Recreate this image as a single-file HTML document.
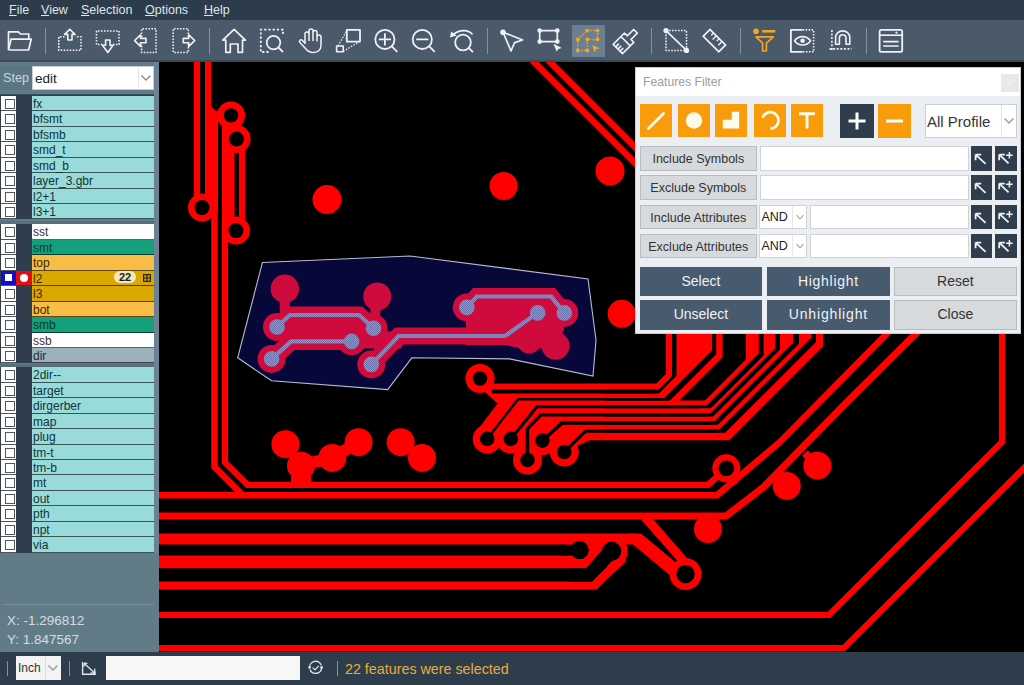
<!DOCTYPE html>
<html><head><meta charset="utf-8">
<style>
*{box-sizing:border-box;margin:0;padding:0}
html,body{width:1024px;height:685px;overflow:hidden;background:#2e3d4c;font-family:"Liberation Sans",sans-serif}
.abs{position:absolute}
#menubar{left:0;top:0;width:1024px;height:20px;background:#2d3c4b;color:#dfe5ea;font-size:12.5px}
#menubar span{position:absolute;top:3px}
#menubar u{text-decoration:underline;text-decoration-thickness:1px;text-underline-offset:1px}
#toolbar{left:0;top:20px;width:1024px;height:40px;background:#4a5a6b}
#tbline{left:0;top:60px;width:1024px;height:2px;background:#3c4a58}
.sep{position:absolute;top:28px;width:1px;height:26px;background:#8393a2}
#left{left:0;top:62px;width:159px;height:590px;background:#627c87}
#canvas{left:159px;top:62px;width:865px;height:590px;background:#000;overflow:hidden}
#status{left:0;top:652px;width:1024px;height:33px;background:#2e3d4c}
.row{position:absolute;left:0;width:154px;background:#2f3d4c}
.cb{position:absolute;left:1px;top:0;width:14.5px;background:#fff}
.cb:after{content:"";position:absolute;left:4px;top:3px;width:8px;height:8px;border:1px solid #555}
.nm{position:absolute;left:32px;top:0;width:121.5px;font-size:12px;line-height:16px;padding-left:1px;color:#0f3535;white-space:nowrap}
.cy{background:#98dbda}
.wh{background:#fff;color:#4a2b2b}
.gr{background:#13a07b;color:#073a2a}
.or{background:#f7bd46;color:#3a2800}
.yl{background:#dba800;color:#3a2800}
.gy{background:#9cb1bc;color:#1f2d35}
#dialog{left:635px;top:67px;width:386px;height:267px;background:#ebeff3;border:1px solid #c9cdd1}
#dtitle{position:absolute;left:0;top:0;width:384px;height:28px;background:#fff;color:#9d9d9d;font-size:12.2px;padding:7px 0 0 7px}
.obtn{position:absolute;width:32px;height:33px;background:#f99c0c}
.gbtn{position:absolute;background:#d6dadd;border:1px solid #b9bdc1;color:#333;font-size:12.5px;text-align:center;line-height:24px}
.inp{position:absolute;background:#fff;border:1px solid #cfd3d7}
.dbtn{position:absolute;width:22px;height:25px;background:#2f3d4c}
.bigbtn{position:absolute;height:29px;font-size:14px;text-align:center;line-height:29px}
</style></head><body>

<div id="menubar" class="abs">
<span style="left:9px"><u>F</u>ile</span>
<span style="left:41px"><u>V</u>iew</span>
<span style="left:81px"><u>S</u>election</span>
<span style="left:145px"><u>O</u>ptions</span>
<span style="left:204px"><u>H</u>elp</span>
</div>
<div id="toolbar" class="abs"></div><div id="tbline" class="abs"></div>
<div class="abs" style="left:572px;top:25px;width:33px;height:32px;background:#6b7f92"></div>
<div class="sep" style="left:45px"></div>
<div class="sep" style="left:209px"></div>
<div class="sep" style="left:487px"></div>
<div class="sep" style="left:651px"></div>
<div class="sep" style="left:740px"></div>
<div class="sep" style="left:866px"></div>
<svg class="abs" style="left:0;top:20px" width="1024" height="42" viewBox="0 20 1024 42"><path d="M8.5 50 V31.8 H18.3 L20.3 34 H28.8 V39" fill="none" stroke="#eef2f5" stroke-width="1.70" stroke-linejoin="round" /><path d="M8.5 50 H28.6 L31.2 39.2 H11 L8.5 50" fill="none" stroke="#eef2f5" stroke-width="1.70" stroke-linejoin="round" /><path d="M64.5 36.8 H58.8 V50.2 H81 V36.8 H75.5" fill="none" stroke="#eef2f5" stroke-width="1.60" stroke-linejoin="round" stroke-dasharray="1.6 1.4"/><path d="M69.8 29.2 L75 34.4 H72 V40 H67.8 V34.4 H64.6 Z" fill="none" stroke="#eef2f5" stroke-width="1.60" stroke-linejoin="round" /><path d="M102.5 44.5 H96.5 V31 H119 V44.5 H113" fill="none" stroke="#eef2f5" stroke-width="1.60" stroke-linejoin="round" stroke-dasharray="1.6 1.4"/><path d="M107.8 52.5 L113 45.2 H110 V40 H105.6 V45.2 H102.5 Z" fill="none" stroke="#eef2f5" stroke-width="1.60" stroke-linejoin="round" /><path d="M141.6 37 V28.8 H156 V52.5 H141.6 V44" fill="none" stroke="#eef2f5" stroke-width="1.60" stroke-linejoin="round" stroke-dasharray="1.6 1.4"/><path d="M134.6 40.6 L140.5 34.8 V38.4 H146 V42.8 H140.5 V46.4 Z" fill="none" stroke="#eef2f5" stroke-width="1.60" stroke-linejoin="round" /><path d="M188.3 37 V28.8 H173.2 V52.5 H188.3 V44" fill="none" stroke="#eef2f5" stroke-width="1.60" stroke-linejoin="round" stroke-dasharray="1.6 1.4"/><path d="M194.7 40.6 L188.8 34.8 V38.4 H183.3 V42.8 H188.8 V46.4 Z" fill="none" stroke="#eef2f5" stroke-width="1.60" stroke-linejoin="round" /><path d="M234.1 29.4 L222.8 40.2 H225.8 V52.3 H230.3 V44 H238 V52.3 H242.5 V40.2 H245.4 Z" fill="none" stroke="#eef2f5" stroke-width="1.70" stroke-linejoin="round" /><path d="M283 34 V29.6 H260.8 V52 H270" fill="none" stroke="#eef2f5" stroke-width="1.80" stroke-linejoin="round" stroke-dasharray="2.2 2"/><circle cx="273.5" cy="42.6" r="6.8" fill="none" stroke="#eef2f5" stroke-width="1.7"/><path d="M278.6 47.6 L283 52" fill="none" stroke="#eef2f5" stroke-width="1.80" stroke-linejoin="round" /><path d="M305 44 V34 A2 2 0 0 1 309 34 V41 M309 41 V31 A2 2 0 0 1 313 31 V41 M313 41 V32.5 A2 2 0 0 1 317 32.5 V41.5 M317 41.5 V37 A2 2 0 0 1 321 37 V45 C321 50 317.5 52.6 313 52.6 C309.5 52.6 307.5 51 305.5 48.5 L299.9 42.6 A1.6 1.6 0 0 1 302.3 40.3 L305 43.2" fill="none" stroke="#eef2f5" stroke-width="1.50" stroke-linejoin="round" /><path d="M346.8 29.9 H360 V41.6 H346.8 Z" fill="none" stroke="#eef2f5" stroke-width="1.80" stroke-linejoin="round" /><path d="M336.6 46 H343.2 V51.8 H336.6 Z" fill="none" stroke="#eef2f5" stroke-width="1.60" stroke-linejoin="round" /><path d="M338 46 L346.8 30.5 M343.2 51.5 L359.5 41.6" fill="none" stroke="#eef2f5" stroke-width="1.20" stroke-linejoin="round" stroke-dasharray="1.6 1.4"/><circle cx="384.9" cy="39.4" r="9.6" fill="none" stroke="#eef2f5" stroke-width="1.8"/><path d="M391.8 46.4 L397.3 51.8 M378.8 39.4 H391 M384.9 33.3 V45.5" fill="none" stroke="#eef2f5" stroke-width="1.80" stroke-linejoin="round" /><circle cx="422.3" cy="39.4" r="9.6" fill="none" stroke="#eef2f5" stroke-width="1.8"/><path d="M429.2 46.4 L434.7 51.8 M416.2 39.4 H428.4" fill="none" stroke="#eef2f5" stroke-width="1.80" stroke-linejoin="round" /><circle cx="463" cy="42.5" r="7.8" fill="none" stroke="#eef2f5" stroke-width="1.8"/><path d="M468.8 48.2 L473 52.2" fill="none" stroke="#eef2f5" stroke-width="1.80" stroke-linejoin="round" /><path d="M472.5 34.5 C469 29.8 460 28.8 453.5 34.5" fill="none" stroke="#eef2f5" stroke-width="1.70" stroke-linejoin="round" /><path d="M450 37.6 L451.2 31.6 L456.6 35.6 Z" fill="#eef2f5"/><path d="M503 32.2 L522.6 40 L514.6 42.6 L511 51 Z" fill="none" stroke="#eef2f5" stroke-width="1.70" stroke-linejoin="round" /><circle cx="503.0" cy="32.2" r="2.8" fill="#eef2f5"/><path d="M539.7 30.6 H557.3 V41.6 H539.7 Z" fill="none" stroke="#eef2f5" stroke-width="1.70" stroke-linejoin="round" /><circle cx="539.7" cy="30.6" r="2.3" fill="#eef2f5"/><circle cx="557.3" cy="30.6" r="2.3" fill="#eef2f5"/><circle cx="539.7" cy="41.6" r="2.3" fill="#eef2f5"/><circle cx="557.3" cy="41.6" r="2.3" fill="#eef2f5"/><path d="M553.5 43.8 L561.8 48 L558.4 48.9 L556.6 51.6 Z" fill="#eef2f5"/><path d="M577.8 39.4 L587.3 30.6 H597.5 V39.4 H587.3 V50.4 H577.8 Z" fill="none" stroke="#f5a623" stroke-width="1.50" stroke-linejoin="round" stroke-dasharray="1.6 1.6"/><circle cx="577.8" cy="39.4" r="1.9" fill="#f5a623"/><circle cx="587.3" cy="30.6" r="1.9" fill="#f5a623"/><circle cx="597.5" cy="30.6" r="1.9" fill="#f5a623"/><circle cx="597.5" cy="39.4" r="1.9" fill="#f5a623"/><circle cx="587.3" cy="39.4" r="1.9" fill="#f5a623"/><circle cx="587.3" cy="50.4" r="1.9" fill="#f5a623"/><circle cx="577.8" cy="50.4" r="1.9" fill="#f5a623"/><path d="M592.2 45 L599.8 48.2 L596.2 49.2 L594.6 52.2 Z" fill="#f5a623"/><g transform="translate(625.6 41.2) rotate(45)"><path d="M-2.6 -14 H2.6 V-5 H6.6 V0 H-6.6 V-5 H-2.6 Z M-6.6 0 H6.6 V11 H-6.6 Z M-3 11 V6.5 M0.2 11 V6.5 M3.2 11 V6.5" fill="none" stroke="#eef2f5" stroke-width="1.6" stroke-linejoin="round"/></g><path d="M666 30.6 H686.5 V50.4 H666 Z" fill="none" stroke="#eef2f5" stroke-width="1.50" stroke-linejoin="round" stroke-dasharray="1.6 1.4"/><path d="M666 30.6 L686.5 50.4" fill="none" stroke="#eef2f5" stroke-width="1.70" stroke-linejoin="round" /><circle cx="666.0" cy="30.6" r="2.6" fill="#eef2f5"/><circle cx="686.5" cy="50.4" r="2.6" fill="#eef2f5"/><g transform="translate(714.4 40.6) rotate(45)"><rect x="-11" y="-4.8" width="22" height="9.6" fill="none" stroke="#eef2f5" stroke-width="1.7"/><path d="M-6 -4.8 V-1.5 M-2 -4.8 V0.5 M2 -4.8 V-1.5 M6 -4.8 V0.5" stroke="#eef2f5" stroke-width="1.4"/></g><circle cx="756.0" cy="31.3" r="2.8" fill="#f5a623"/><path d="M762.2 31.3 H775.3" fill="none" stroke="#f5a623" stroke-width="2.60" stroke-linejoin="round" /><path d="M756 36.9 H773.3 L766.4 43.2 V51 H762.6 V43.2 Z" fill="none" stroke="#f5a623" stroke-width="1.70" stroke-linejoin="round" /><path d="M802.6 29.9 H790.9 V51.8 H802.6" fill="none" stroke="#eef2f5" stroke-width="1.80" stroke-linejoin="round" /><path d="M802.6 29.9 H813.6 V51.8 H802.6" fill="none" stroke="#eef2f5" stroke-width="1.60" stroke-linejoin="round" stroke-dasharray="1.6 1.4"/><path d="M794.5 40.8 C798.5 35.2 806.6 35.2 810.6 40.8 C806.6 46.4 798.5 46.4 794.5 40.8 Z" fill="none" stroke="#eef2f5" stroke-width="1.60" stroke-linejoin="round" /><circle cx="802.6" cy="40.8" r="2.3" fill="#eef2f5"/><path d="M831.9 29.9 V51.5 M829.5 48.9 H851.6" fill="none" stroke="#eef2f5" stroke-width="1.60" stroke-linejoin="round" stroke-dasharray="2 1.6"/><path d="M835.6 44.2 V37.8 C835.6 28.6 849.8 28.6 849.8 37.8 V44.2 H846 V37.8 C846 33.8 839.4 33.8 839.4 37.8 V44.2 Z" fill="none" stroke="#eef2f5" stroke-width="1.60" stroke-linejoin="round" /><rect x="879.6" y="29.9" width="22.6" height="21.9" rx="1.6" fill="none" stroke="#eef2f5" stroke-width="1.8"/><path d="M879.6 35.2 H902.2" fill="none" stroke="#eef2f5" stroke-width="1.60" stroke-linejoin="round" /><circle cx="896.4" cy="32.6" r="1.1" fill="#eef2f5"/><path d="M883.2 41.6 H898.6 M883.2 46 H898.6" fill="none" stroke="#eef2f5" stroke-width="1.70" stroke-linejoin="round" /></svg>
<div id="left" class="abs"></div>
<div class="abs" style="left:154px;top:62px;width:5px;height:491px;background:#6b8295"></div>
<div class="abs" style="left:0;top:66px;width:32px;height:24px;background:#5a7683"></div>
<div class="abs" style="left:3px;top:71px;font-size:12.6px;color:#c9d6dc">Step</div>
<div class="abs" style="left:32px;top:66px;width:122px;height:24px;background:#fff;border:1px solid #c8d0d4"></div>
<div class="abs" style="left:35px;top:70.5px;font-size:13.5px;color:#222">edit</div>
<div class="abs" style="left:138px;top:67px;width:1px;height:22px;background:#e6e6e6"></div>
<svg class="abs" style="left:140px;top:74px" width="12" height="8"><path d="M1.5 1.5 L6 6 L10.5 1.5" fill="none" stroke="#888" stroke-width="1.3"/></svg>
<div class="abs" style="left:0;top:94px;width:154px;height:1px;background:#3c4f5c"></div>
<div class="abs" style="left:0;top:94.90px;width:154px;height:124.60px;background:#2f3d4c"></div>
<div class="abs cb" style="top:95.90px;height:15.45px;box-shadow:inset 0 -1px rgba(20,28,36,0.75)"></div>
<div class="abs nm cy" style="top:95.90px;height:15.45px;box-shadow:inset 0 -1px rgba(0,0,0,0.62)">fx</div>
<div class="abs cb" style="top:111.35px;height:15.45px;box-shadow:inset 0 -1px rgba(20,28,36,0.75)"></div>
<div class="abs nm cy" style="top:111.35px;height:15.45px;box-shadow:inset 0 -1px rgba(0,0,0,0.62)">bfsmt</div>
<div class="abs cb" style="top:126.80px;height:15.45px;box-shadow:inset 0 -1px rgba(20,28,36,0.75)"></div>
<div class="abs nm cy" style="top:126.80px;height:15.45px;box-shadow:inset 0 -1px rgba(0,0,0,0.62)">bfsmb</div>
<div class="abs cb" style="top:142.25px;height:15.45px;box-shadow:inset 0 -1px rgba(20,28,36,0.75)"></div>
<div class="abs nm cy" style="top:142.25px;height:15.45px;box-shadow:inset 0 -1px rgba(0,0,0,0.62)">smd_t</div>
<div class="abs cb" style="top:157.70px;height:15.45px;box-shadow:inset 0 -1px rgba(20,28,36,0.75)"></div>
<div class="abs nm cy" style="top:157.70px;height:15.45px;box-shadow:inset 0 -1px rgba(0,0,0,0.62)">smd_b</div>
<div class="abs cb" style="top:173.15px;height:15.45px;box-shadow:inset 0 -1px rgba(20,28,36,0.75)"></div>
<div class="abs nm cy" style="top:173.15px;height:15.45px;box-shadow:inset 0 -1px rgba(0,0,0,0.62)">layer_3.gbr</div>
<div class="abs cb" style="top:188.60px;height:15.45px;box-shadow:inset 0 -1px rgba(20,28,36,0.75)"></div>
<div class="abs nm cy" style="top:188.60px;height:15.45px;box-shadow:inset 0 -1px rgba(0,0,0,0.62)">l2+1</div>
<div class="abs cb" style="top:204.05px;height:15.45px;box-shadow:inset 0 -1px rgba(20,28,36,0.75)"></div>
<div class="abs nm cy" style="top:204.05px;height:15.45px;box-shadow:inset 0 -1px rgba(0,0,0,0.62)">l3+1</div>
<div class="abs" style="left:0;top:223.40px;width:154px;height:140.05px;background:#2f3d4c"></div>
<div class="abs cb" style="top:224.40px;height:15.45px;box-shadow:inset 0 -1px rgba(20,28,36,0.75)"></div>
<div class="abs nm wh" style="top:224.40px;height:15.45px;box-shadow:inset 0 -1px rgba(0,0,0,0.62)">sst</div>
<div class="abs cb" style="top:239.85px;height:15.45px;box-shadow:inset 0 -1px rgba(20,28,36,0.75)"></div>
<div class="abs nm gr" style="top:239.85px;height:15.45px;box-shadow:inset 0 -1px rgba(0,0,0,0.62)">smt</div>
<div class="abs cb" style="top:255.30px;height:15.45px;box-shadow:inset 0 -1px rgba(20,28,36,0.75)"></div>
<div class="abs nm or" style="top:255.30px;height:15.45px;box-shadow:inset 0 -1px rgba(0,0,0,0.62)">top</div>
<div class="abs cb" style="top:270.75px;height:15.45px;box-shadow:inset 0 -1px rgba(20,28,36,0.75)"></div>
<div class="abs nm yl" style="top:270.75px;height:15.45px;box-shadow:inset 0 -1px rgba(0,0,0,0.62)">l2</div>
<div class="abs cb" style="top:286.20px;height:15.45px;box-shadow:inset 0 -1px rgba(20,28,36,0.75)"></div>
<div class="abs nm yl" style="top:286.20px;height:15.45px;box-shadow:inset 0 -1px rgba(0,0,0,0.62)">l3</div>
<div class="abs cb" style="top:301.65px;height:15.45px;box-shadow:inset 0 -1px rgba(20,28,36,0.75)"></div>
<div class="abs nm or" style="top:301.65px;height:15.45px;box-shadow:inset 0 -1px rgba(0,0,0,0.62)">bot</div>
<div class="abs cb" style="top:317.10px;height:15.45px;box-shadow:inset 0 -1px rgba(20,28,36,0.75)"></div>
<div class="abs nm gr" style="top:317.10px;height:15.45px;box-shadow:inset 0 -1px rgba(0,0,0,0.62)">smb</div>
<div class="abs cb" style="top:332.55px;height:15.45px;box-shadow:inset 0 -1px rgba(20,28,36,0.75)"></div>
<div class="abs nm wh" style="top:332.55px;height:15.45px;box-shadow:inset 0 -1px rgba(0,0,0,0.62)">ssb</div>
<div class="abs cb" style="top:348.00px;height:15.45px;box-shadow:inset 0 -1px rgba(20,28,36,0.75)"></div>
<div class="abs nm gy" style="top:348.00px;height:15.45px;box-shadow:inset 0 -1px rgba(0,0,0,0.62)">dir</div>
<div class="abs" style="left:0;top:366.30px;width:154px;height:186.40px;background:#2f3d4c"></div>
<div class="abs cb" style="top:367.30px;height:15.45px;box-shadow:inset 0 -1px rgba(20,28,36,0.75)"></div>
<div class="abs nm cy" style="top:367.30px;height:15.45px;box-shadow:inset 0 -1px rgba(0,0,0,0.62)">2dir--</div>
<div class="abs cb" style="top:382.75px;height:15.45px;box-shadow:inset 0 -1px rgba(20,28,36,0.75)"></div>
<div class="abs nm cy" style="top:382.75px;height:15.45px;box-shadow:inset 0 -1px rgba(0,0,0,0.62)">target</div>
<div class="abs cb" style="top:398.20px;height:15.45px;box-shadow:inset 0 -1px rgba(20,28,36,0.75)"></div>
<div class="abs nm cy" style="top:398.20px;height:15.45px;box-shadow:inset 0 -1px rgba(0,0,0,0.62)">dirgerber</div>
<div class="abs cb" style="top:413.65px;height:15.45px;box-shadow:inset 0 -1px rgba(20,28,36,0.75)"></div>
<div class="abs nm cy" style="top:413.65px;height:15.45px;box-shadow:inset 0 -1px rgba(0,0,0,0.62)">map</div>
<div class="abs cb" style="top:429.10px;height:15.45px;box-shadow:inset 0 -1px rgba(20,28,36,0.75)"></div>
<div class="abs nm cy" style="top:429.10px;height:15.45px;box-shadow:inset 0 -1px rgba(0,0,0,0.62)">plug</div>
<div class="abs cb" style="top:444.55px;height:15.45px;box-shadow:inset 0 -1px rgba(20,28,36,0.75)"></div>
<div class="abs nm cy" style="top:444.55px;height:15.45px;box-shadow:inset 0 -1px rgba(0,0,0,0.62)">tm-t</div>
<div class="abs cb" style="top:460.00px;height:15.45px;box-shadow:inset 0 -1px rgba(20,28,36,0.75)"></div>
<div class="abs nm cy" style="top:460.00px;height:15.45px;box-shadow:inset 0 -1px rgba(0,0,0,0.62)">tm-b</div>
<div class="abs cb" style="top:475.45px;height:15.45px;box-shadow:inset 0 -1px rgba(20,28,36,0.75)"></div>
<div class="abs nm cy" style="top:475.45px;height:15.45px;box-shadow:inset 0 -1px rgba(0,0,0,0.62)">mt</div>
<div class="abs cb" style="top:490.90px;height:15.45px;box-shadow:inset 0 -1px rgba(20,28,36,0.75)"></div>
<div class="abs nm cy" style="top:490.90px;height:15.45px;box-shadow:inset 0 -1px rgba(0,0,0,0.62)">out</div>
<div class="abs cb" style="top:506.35px;height:15.45px;box-shadow:inset 0 -1px rgba(20,28,36,0.75)"></div>
<div class="abs nm cy" style="top:506.35px;height:15.45px;box-shadow:inset 0 -1px rgba(0,0,0,0.62)">pth</div>
<div class="abs cb" style="top:521.80px;height:15.45px;box-shadow:inset 0 -1px rgba(20,28,36,0.75)"></div>
<div class="abs nm cy" style="top:521.80px;height:15.45px;box-shadow:inset 0 -1px rgba(0,0,0,0.62)">npt</div>
<div class="abs cb" style="top:537.25px;height:15.45px;box-shadow:inset 0 -1px rgba(20,28,36,0.75)"></div>
<div class="abs nm cy" style="top:537.25px;height:15.45px;box-shadow:inset 0 -1px rgba(0,0,0,0.62)">via</div>
<div class="abs" style="left:0;top:221.0px;width:154px;height:3px;background:#56707f"></div>
<div class="abs" style="left:0;top:364.0px;width:154px;height:3px;background:#56707f"></div>
<div class="abs" style="left:1px;top:270.75px;width:14.5px;height:14.5px;background:#1010c8"></div>
<div class="abs" style="left:5px;top:274.25px;width:7px;height:7px;background:#fff"></div>
<div class="abs" style="left:16px;top:270.75px;width:16px;height:14.5px;background:#e01010"></div>
<div class="abs" style="left:19.5px;top:274.25px;width:8px;height:8px;border-radius:50%;background:#fff"></div>
<div class="abs" style="left:114px;top:271.35px;width:22px;height:12px;border-radius:6px;background:#f6e9b9;font-size:11px;line-height:12px;text-align:center;color:#1a1a1a;font-weight:bold">22</div>
<svg class="abs" style="left:142.5px;top:273.75px" width="8" height="8"><rect x="0.6" y="0.6" width="6.8" height="6.8" fill="none" stroke="#222" stroke-width="1.2"/><path d="M4 0.6V7.4M0.6 4H7.4" stroke="#222" stroke-width="1.2"/></svg>
<div class="abs" style="left:3px;top:604px;width:151px;height:1px;background:#7890a0"></div>
<div class="abs" style="left:7px;top:613px;font-size:13.5px;color:#d4dde2">X: -1.296812</div>
<div class="abs" style="left:7px;top:632px;font-size:13.5px;color:#d4dde2">Y: 1.847567</div>
<svg id="canvas" class="abs" width="865" height="590" viewBox="159 62 865 590"><path d="M197.0 50.0 L197.0 203.0" fill="none" stroke="#ff0000" stroke-width="6.20" stroke-linejoin="miter" stroke-linecap="butt"/><circle cx="202.0" cy="207.6" r="14.0" fill="#ff0000"/><path d="M205.0 50.0 L211.0 50.0 L211.0 106.0 L216.0 111.0 L224.0 111.0 L224.0 118.0 L218.0 118.0 L218.0 212.0 L205.0 212.0Z" fill="#ff0000"/><path d="M214.5 205.0 L214.5 467.0 L242.5 495.0" fill="none" stroke="#ff0000" stroke-width="6.60" stroke-linejoin="miter" stroke-linecap="butt"/><circle cx="231.0" cy="115.4" r="14.0" fill="#ff0000"/><circle cx="236.5" cy="139.0" r="14.0" fill="#ff0000"/><path d="M222.0 122.0 L234.5 122.0 L234.5 228.0 L222.0 228.0Z" fill="#ff0000"/><path d="M242.0 139.0 L242.0 225.0" fill="none" stroke="#ff0000" stroke-width="6.20" stroke-linejoin="miter" stroke-linecap="butt"/><circle cx="236.0" cy="230.6" r="14.0" fill="#ff0000"/><path d="M225.0 225.0 L225.0 462.4 L247.6 484.8 L708.0 484.8 L726.3 468.3" fill="none" stroke="#ff0000" stroke-width="6.20" stroke-linejoin="miter" stroke-linecap="butt"/><circle cx="726.3" cy="468.3" r="14.0" fill="#ff0000"/><circle cx="733.0" cy="479.0" r="6.0" fill="#ff0000"/><circle cx="327.0" cy="199.6" r="14.5" fill="#ff0000"/><circle cx="503.6" cy="186.0" r="14.0" fill="#ff0000"/><circle cx="610.0" cy="171.0" r="14.5" fill="#ff0000"/><circle cx="621.6" cy="313.8" r="14.0" fill="#ff0000"/><path d="M527.0 55.0 L650.0 178.0" fill="none" stroke="#ff0000" stroke-width="6.40" stroke-linejoin="miter" stroke-linecap="butt"/><path d="M543.0 55.0 L650.0 162.0" fill="none" stroke="#ff0000" stroke-width="6.40" stroke-linejoin="miter" stroke-linecap="butt"/><path d="M150.0 495.3 L717.0 495.3 L780.0 442.0 L886.0 334.4 L900.0 320.0" fill="none" stroke="#ff0000" stroke-width="6.40" stroke-linejoin="miter" stroke-linecap="butt"/><path d="M150.0 516.0 L726.0 516.0 L763.0 487.6 L849.0 400.0 L915.0 334.4 L930.0 319.0" fill="none" stroke="#ff0000" stroke-width="7.00" stroke-linejoin="miter" stroke-linecap="butt"/><path d="M645.0 517.0 L688.0 566.0" fill="none" stroke="#ff0000" stroke-width="9.20" stroke-linejoin="miter" stroke-linecap="butt"/><path d="M150.0 539.0 L634.0 539.0" fill="none" stroke="#ff0000" stroke-width="11.00" stroke-linejoin="miter" stroke-linecap="butt"/><path d="M630.0 533.5 L641.0 533.5 L686.0 571.0 L678.0 582.0 L630.0 542.0Z" fill="#ff0000"/><circle cx="685.5" cy="574.0" r="16.0" fill="#ff0000"/><path d="M150.0 555.6 L590.0 555.6 L601.0 551.0 L585.8 568.3 L150.0 568.3Z" fill="#ff0000"/><path d="M150.0 581.5 L592.0 581.5 L613.0 561.0 L627.0 560.5 L596.3 589.4 L150.0 589.4Z" fill="#ff0000"/><circle cx="579.6" cy="549.9" r="14.5" fill="#ff0000"/><circle cx="611.7" cy="551.2" r="16.0" fill="#ff0000"/><path d="M580.0 536.0 L612.0 536.0 L612.0 566.0 L580.0 566.0Z" fill="#ff0000"/><path d="M560.0 544.7 L580.5 544.7 L580.5 555.6 L560.0 555.6Z" fill="#000"/><path d="M570.0 568.3 L585.8 568.3 L603.0 549.0 L613.0 560.0 L592.0 581.5 L570.0 581.5Z" fill="#000"/><path d="M150.0 615.0 L829.0 615.0 L1002.0 442.0 L1002.0 320.0" fill="none" stroke="#ff0000" stroke-width="6.20" stroke-linejoin="miter" stroke-linecap="butt"/><path d="M150.0 648.0 L844.0 648.0 L1040.0 452.0" fill="none" stroke="#ff0000" stroke-width="6.20" stroke-linejoin="miter" stroke-linecap="butt"/><circle cx="708.0" cy="529.0" r="14.0" fill="#ff0000"/><circle cx="786.7" cy="485.9" r="14.0" fill="#ff0000"/><circle cx="817.4" cy="465.7" r="14.0" fill="#ff0000"/><path d="M817.4 465.7 L805.0 453.0" fill="none" stroke="#ff0000" stroke-width="8.00" stroke-linejoin="miter" stroke-linecap="butt"/><circle cx="285.4" cy="444.2" r="14.0" fill="#ff0000"/><circle cx="301.0" cy="465.7" r="14.0" fill="#ff0000"/><circle cx="332.3" cy="457.9" r="14.0" fill="#ff0000"/><circle cx="358.6" cy="442.2" r="14.0" fill="#ff0000"/><circle cx="400.6" cy="442.2" r="14.0" fill="#ff0000"/><circle cx="422.0" cy="457.9" r="14.0" fill="#ff0000"/><path d="M301.0 465.0 L332.0 458.0" fill="none" stroke="#ff0000" stroke-width="12.00" stroke-linejoin="miter" stroke-linecap="butt"/><path d="M332.3 457.9 L358.6 442.2" fill="none" stroke="#ff0000" stroke-width="12.00" stroke-linejoin="miter" stroke-linecap="butt"/><path d="M291.0 470.0 L311.0 470.0 L311.0 486.0 L291.0 486.0Z" fill="#ff0000"/><circle cx="480.0" cy="378.5" r="14.5" fill="#ff0000"/><circle cx="487.2" cy="438.9" r="14.5" fill="#ff0000"/><circle cx="510.8" cy="438.9" r="14.5" fill="#ff0000"/><circle cx="527.5" cy="459.9" r="14.5" fill="#ff0000"/><circle cx="542.4" cy="440.6" r="14.5" fill="#ff0000"/><circle cx="564.3" cy="452.0" r="14.5" fill="#ff0000"/><path d="M489.0 389.0 L606.0 389.0 L606.0 440.0 L590.0 440.0 L564.3 452.0 L542.4 440.6 L527.5 459.9 L510.8 438.9 L487.2 438.9 L476.0 432.0 L497.6 403.6 L485.0 392.0Z" fill="#ff0000"/><path d="M480.0 377.5 L500.0 399.0" fill="none" stroke="#ff0000" stroke-width="9.00" stroke-linejoin="miter" stroke-linecap="butt"/><path d="M480.0 377.5 L489.0 386.5 L657.5 386.5 L669.0 375.0 L669.0 320.0" fill="none" stroke="#ff0000" stroke-width="6.00" stroke-linejoin="miter" stroke-linecap="butt"/><path d="M676.5 320.0 L712.2 320.0 L712.2 350.2 L664.4 398.0 L497.0 398.0 L497.0 393.5 L658.8 393.5 L676.5 375.8Z" fill="#ff0000"/><path d="M672.0 403.0 L719.4 355.6 L719.4 320.0" fill="none" stroke="#ff0000" stroke-width="6.40" stroke-linejoin="miter" stroke-linecap="butt"/><path d="M521.0 400.5 L704.9 400.5 L745.8 359.6 L745.8 320.0 L758.8 320.0 L758.8 353.3 L707.1 405.0 L521.0 405.0Z" fill="#ff0000"/><path d="M537.0 408.2 L710.9 408.2 L763.6 355.5 L763.6 320.0 L775.2 320.0 L775.2 348.3 L710.5 413.0 L537.0 413.0Z" fill="#ff0000"/><path d="M545.0 416.5 L713.1 416.5 L780.0 349.6 L780.0 320.0 L793.0 320.0 L793.0 342.7 L714.7 421.0 L545.0 421.0Z" fill="#ff0000"/><path d="M562.0 424.8 L717.9 424.8 L799.0 343.7 L799.0 320.0 L811.5 320.0 L811.5 337.4 L719.4 429.5 L562.0 429.5Z" fill="#ff0000"/><path d="M586.0 432.8 L725.1 432.8 L816.0 341.9 L816.0 320.0 L823.0 320.0 L823.0 346.3 L729.1 440.2 L586.0 440.2Z" fill="#ff0000"/><path d="M492.0 391.5 L655.0 391.5" fill="none" stroke="#000" stroke-width="4.00" stroke-linejoin="miter" stroke-linecap="butt"/><path d="M487.2 438.9 L518.0 399.2 L669.0 399.2" fill="none" stroke="#000" stroke-width="2.50" stroke-linejoin="miter" stroke-linecap="butt"/><path d="M510.8 438.9 L537.0 406.6 L700.0 406.6" fill="none" stroke="#000" stroke-width="3.20" stroke-linejoin="miter" stroke-linecap="butt"/><path d="M527.5 459.9 L527.5 428.6 L541.0 414.8 L706.0 414.8" fill="none" stroke="#000" stroke-width="3.50" stroke-linejoin="miter" stroke-linecap="butt"/><path d="M542.4 440.6 L562.0 422.9 L712.0 422.9" fill="none" stroke="#000" stroke-width="3.80" stroke-linejoin="miter" stroke-linecap="butt"/><path d="M564.3 452.0 L585.6 431.1 L718.0 431.1" fill="none" stroke="#000" stroke-width="3.30" stroke-linejoin="miter" stroke-linecap="butt"/><path d="M262.4 262.5 L410.0 256.0 L588.0 279.0 L596.0 340.0 L593.0 376.0 L509.5 358.9 L411.8 357.8 L387.7 389.6 L271.6 380.8 L237.7 357.8Z" fill="#07073a" stroke="#b4bcd4" stroke-width="1.1"/><circle cx="284.8" cy="288.8" r="14.2" fill="#cf0a3c"/><circle cx="377.2" cy="296.5" r="14.0" fill="#cf0a3c"/><circle cx="529.0" cy="341.4" r="12.0" fill="#cf0a3c"/><circle cx="555.5" cy="345.8" r="14.0" fill="#cf0a3c"/><circle cx="277.0" cy="327.0" r="14.0" fill="#cf0a3c"/><circle cx="373.5" cy="328.2" r="14.0" fill="#cf0a3c"/><circle cx="351.6" cy="341.4" r="14.0" fill="#cf0a3c"/><circle cx="271.6" cy="358.9" r="14.0" fill="#cf0a3c"/><circle cx="371.3" cy="364.4" r="14.0" fill="#cf0a3c"/><circle cx="466.8" cy="307.4" r="14.0" fill="#cf0a3c"/><circle cx="537.6" cy="312.9" r="14.0" fill="#cf0a3c"/><circle cx="564.3" cy="312.9" r="14.0" fill="#cf0a3c"/><path d="M277.0 327.0 L290.0 315.0 L359.0 315.0 L373.5 328.2" fill="none" stroke="#cf0a3c" stroke-width="17.00" stroke-linejoin="miter" stroke-linecap="butt"/><path d="M271.6 358.9 L291.3 341.4 L351.6 341.4" fill="none" stroke="#cf0a3c" stroke-width="17.00" stroke-linejoin="miter" stroke-linecap="butt"/><path d="M371.3 364.4 L398.7 336.0 L505.0 336.0 L537.6 312.9" fill="none" stroke="#cf0a3c" stroke-width="17.00" stroke-linejoin="miter" stroke-linecap="butt"/><path d="M466.8 307.4 L476.7 296.5 L551.0 296.5 L564.3 312.9" fill="none" stroke="#cf0a3c" stroke-width="17.00" stroke-linejoin="miter" stroke-linecap="butt"/><path d="M398.7 336.0 L396.0 340.0 L300.0 340.0" fill="none" stroke="#cf0a3c" stroke-width="17.00" stroke-linejoin="miter" stroke-linecap="butt"/><path d="M284.8 288.8 L284.8 315.0" fill="none" stroke="#cf0a3c" stroke-width="10.00" stroke-linejoin="miter" stroke-linecap="butt"/><path d="M377.2 296.5 L373.5 328.0" fill="none" stroke="#cf0a3c" stroke-width="10.00" stroke-linejoin="miter" stroke-linecap="butt"/><path d="M280.0 315.0 L359.0 315.0 L373.0 328.0 L352.0 341.0 L280.0 341.0Z" fill="#cf0a3c"/><path d="M466.0 296.0 L551.0 296.0 L564.0 313.0 L564.0 330.0 L555.0 346.0 L529.0 350.0 L505.0 345.0 L466.0 345.0 L466.0 307.0Z" fill="#cf0a3c"/><defs><pattern id="dith" width="2" height="2" patternUnits="userSpaceOnUse"><rect width="2" height="2" fill="#8a98d8"/><rect width="1" height="1" fill="#6a70a8"/><rect x="1" y="1" width="1" height="1" fill="#6a70a8"/></pattern></defs><path d="M277.0 327.0 L290.0 315.0 L359.0 315.0 L373.5 328.2" fill="none" stroke="url(#dith)" stroke-width="4.20" stroke-linejoin="miter" stroke-linecap="butt"/><path d="M271.6 358.9 L291.3 341.4 L351.6 341.4" fill="none" stroke="url(#dith)" stroke-width="4.20" stroke-linejoin="miter" stroke-linecap="butt"/><path d="M371.3 364.4 L398.7 336.0 L505.0 336.0 L537.6 312.9" fill="none" stroke="url(#dith)" stroke-width="4.20" stroke-linejoin="miter" stroke-linecap="butt"/><path d="M466.8 307.4 L476.7 296.5 L551.0 296.5 L564.3 312.9" fill="none" stroke="url(#dith)" stroke-width="4.20" stroke-linejoin="miter" stroke-linecap="butt"/><circle cx="277.0" cy="327.0" r="7.8" fill="url(#dith)"/><circle cx="373.5" cy="328.2" r="7.8" fill="url(#dith)"/><circle cx="351.6" cy="341.4" r="7.8" fill="url(#dith)"/><circle cx="271.6" cy="358.9" r="7.8" fill="url(#dith)"/><circle cx="371.3" cy="364.4" r="7.8" fill="url(#dith)"/><circle cx="466.8" cy="307.4" r="7.8" fill="url(#dith)"/><circle cx="537.6" cy="312.9" r="7.8" fill="url(#dith)"/><circle cx="564.3" cy="312.9" r="7.8" fill="url(#dith)"/><circle cx="202.0" cy="207.6" r="7.5" fill="#000"/><circle cx="231.0" cy="115.4" r="7.2" fill="#000"/><circle cx="236.5" cy="139.0" r="7.5" fill="#000"/><circle cx="236.0" cy="230.6" r="7.5" fill="#000"/><circle cx="726.3" cy="468.3" r="7.9" fill="#000"/><circle cx="685.5" cy="574.0" r="9.2" fill="#000"/><circle cx="579.6" cy="549.9" r="9.2" fill="#000"/><circle cx="611.7" cy="551.2" r="9.6" fill="#000"/><circle cx="480.0" cy="378.5" r="7.3" fill="#000"/><circle cx="487.2" cy="438.9" r="7.3" fill="#000"/><circle cx="510.8" cy="438.9" r="7.3" fill="#000"/><circle cx="527.5" cy="459.9" r="7.3" fill="#000"/><circle cx="542.4" cy="440.6" r="7.3" fill="#000"/><circle cx="564.3" cy="452.0" r="7.3" fill="#000"/></svg>
<div id="dialog" class="abs">
<div id="dtitle">Features Filter</div>
<div class="abs" style="left:365px;top:6px;width:18px;height:18px;background:#e6e8ea"></div>
<svg class="abs" style="left:369px;top:10px" width="10" height="10"><path d="M2 2L8 8M8 2L2 8" stroke="#f3f3f3" stroke-width="1"/></svg>
<div class="obtn" style="left:3.8px;top:36.0px"><svg width="32" height="33"><path d="M8.5 24.5 L23.5 9.5" stroke="#fffbea" stroke-width="2.9" stroke-linecap="round"/></svg></div>
<div class="obtn" style="left:41.6px;top:36.0px"><svg width="32" height="33"><circle cx="16" cy="16.5" r="8.2" fill="#fffbea"/></svg></div>
<div class="obtn" style="left:79.4px;top:36.0px"><svg width="32" height="33"><path d="M7.8 24.5 H24.2 V7.8 H16.8 V15.8 H7.8 Z" fill="#fffbea"/></svg></div>
<div class="obtn" style="left:117.6px;top:36.0px"><svg width="32" height="33"><path d="M8.6 13.6 A8.2 8.2 0 1 1 16.5 24.6" fill="none" stroke="#fffbea" stroke-width="2.7"/></svg></div>
<div class="obtn" style="left:155.4px;top:36.0px"><svg width="32" height="33"><path d="M8 9.8 H24 M16 9.8 V24.5" stroke="#fffbea" stroke-width="2.9"/></svg></div>
<div class="abs" style="left:204.4px;top:36.0px;width:34px;height:34px;background:#2f3d4c"><svg width="34" height="34"><path d="M17 8.5V25.5M8.5 17H25.5" stroke="#fff" stroke-width="3"/></svg></div>
<div class="abs" style="left:242.3px;top:36.0px;width:33px;height:34px;background:#f99c0c"><svg width="33" height="34"><path d="M8 17H25" stroke="#fff" stroke-width="3"/></svg></div>
<div class="abs" style="left:288.5px;top:36.0px;width:92px;height:34px;background:#fff;border:1px solid #ccd0d4"></div>
<div class="abs" style="left:291.0px;top:45.0px;font-size:15px;color:#333">All Profile</div>
<div class="abs" style="left:365.0px;top:37.0px;width:1px;height:32px;background:#e4e4e4"></div>
<svg class="abs" style="left:367.0px;top:49.0px" width="12" height="8"><path d="M1.5 1.5 L6 6 L10.5 1.5" fill="none" stroke="#999" stroke-width="1.3"/></svg>
<div class="gbtn" style="left:3.8px;top:78.0px;width:117px;height:24.5px">Include Symbols</div>
<div class="inp" style="left:123.5px;top:78.0px;width:209px;height:24.5px"></div>
<div class="dbtn" style="left:334.8px;top:78.0px;width:21.5px;height:24.5px"><svg width="22" height="25"><path d="M4.6 8.6 L14.6 17.8 M4.6 8.6 V14.2 M4.6 8.6 H10.2" fill="none" stroke="#eef2f5" stroke-width="1.8"/></svg></div>
<div class="dbtn" style="left:359.2px;top:78.0px;width:21.5px;height:24.5px"><svg width="22" height="25"><path d="M4.2 8.6 L13.6 17.4 M4.2 8.6 V14.2 M4.2 8.6 H9.8" fill="none" stroke="#eef2f5" stroke-width="1.8"/><path d="M14.4 6V12.6M11.1 9.3H17.7" stroke="#eef2f5" stroke-width="1.5"/></svg></div>
<div class="gbtn" style="left:3.8px;top:107.4px;width:117px;height:24.5px">Exclude Symbols</div>
<div class="inp" style="left:123.5px;top:107.4px;width:209px;height:24.5px"></div>
<div class="dbtn" style="left:334.8px;top:107.4px;width:21.5px;height:24.5px"><svg width="22" height="25"><path d="M4.6 8.6 L14.6 17.8 M4.6 8.6 V14.2 M4.6 8.6 H10.2" fill="none" stroke="#eef2f5" stroke-width="1.8"/></svg></div>
<div class="dbtn" style="left:359.2px;top:107.4px;width:21.5px;height:24.5px"><svg width="22" height="25"><path d="M4.2 8.6 L13.6 17.4 M4.2 8.6 V14.2 M4.2 8.6 H9.8" fill="none" stroke="#eef2f5" stroke-width="1.8"/><path d="M14.4 6V12.6M11.1 9.3H17.7" stroke="#eef2f5" stroke-width="1.5"/></svg></div>
<div class="gbtn" style="left:3.8px;top:136.5px;width:117px;height:24.5px">Include Attributes</div>
<div class="inp" style="left:123.0px;top:136.5px;width:48px;height:24.5px"></div>
<div class="abs" style="left:125.5px;top:141.5px;font-size:12.5px;color:#222">AND</div>
<div class="abs" style="left:156.0px;top:137.5px;width:1px;height:22px;background:#e8e8e8"></div>
<svg class="abs" style="left:158.5px;top:145.5px" width="10" height="7"><path d="M1.5 1.2 L5 4.8 L8.5 1.2" fill="none" stroke="#aaa" stroke-width="1.2"/></svg>
<div class="inp" style="left:173.5px;top:136.5px;width:159px;height:24.5px"></div>
<div class="dbtn" style="left:334.8px;top:136.5px;width:21.5px;height:24.5px"><svg width="22" height="25"><path d="M4.6 8.6 L14.6 17.8 M4.6 8.6 V14.2 M4.6 8.6 H10.2" fill="none" stroke="#eef2f5" stroke-width="1.8"/></svg></div>
<div class="dbtn" style="left:359.2px;top:136.5px;width:21.5px;height:24.5px"><svg width="22" height="25"><path d="M4.2 8.6 L13.6 17.4 M4.2 8.6 V14.2 M4.2 8.6 H9.8" fill="none" stroke="#eef2f5" stroke-width="1.8"/><path d="M14.4 6V12.6M11.1 9.3H17.7" stroke="#eef2f5" stroke-width="1.5"/></svg></div>
<div class="gbtn" style="left:3.8px;top:165.5px;width:117px;height:24.5px">Exclude Attributes</div>
<div class="inp" style="left:123.0px;top:165.5px;width:48px;height:24.5px"></div>
<div class="abs" style="left:125.5px;top:170.5px;font-size:12.5px;color:#222">AND</div>
<div class="abs" style="left:156.0px;top:166.5px;width:1px;height:22px;background:#e8e8e8"></div>
<svg class="abs" style="left:158.5px;top:174.5px" width="10" height="7"><path d="M1.5 1.2 L5 4.8 L8.5 1.2" fill="none" stroke="#aaa" stroke-width="1.2"/></svg>
<div class="inp" style="left:173.5px;top:165.5px;width:159px;height:24.5px"></div>
<div class="dbtn" style="left:334.8px;top:165.5px;width:21.5px;height:24.5px"><svg width="22" height="25"><path d="M4.6 8.6 L14.6 17.8 M4.6 8.6 V14.2 M4.6 8.6 H10.2" fill="none" stroke="#eef2f5" stroke-width="1.8"/></svg></div>
<div class="dbtn" style="left:359.2px;top:165.5px;width:21.5px;height:24.5px"><svg width="22" height="25"><path d="M4.2 8.6 L13.6 17.4 M4.2 8.6 V14.2 M4.2 8.6 H9.8" fill="none" stroke="#eef2f5" stroke-width="1.8"/><path d="M14.4 6V12.6M11.1 9.3H17.7" stroke="#eef2f5" stroke-width="1.5"/></svg></div>
<div class="bigbtn" style="left:3.5px;top:198.5px;width:122.8px;height:29px;letter-spacing:0.00px;background:#485a6d;color:#eef2f5">Select</div>
<div class="bigbtn" style="left:131.0px;top:198.5px;width:122.8px;height:29px;letter-spacing:0.70px;background:#485a6d;color:#eef2f5">Highlight</div>
<div class="bigbtn" style="left:258.0px;top:198.5px;width:122.8px;height:29px;letter-spacing:0.00px;background:#d6dadd;color:#333;border:1px solid #b9bdc1;line-height:27px">Reset</div>
<div class="bigbtn" style="left:3.5px;top:232.2px;width:122.8px;height:30px;letter-spacing:0.00px;background:#485a6d;color:#eef2f5">Unselect</div>
<div class="bigbtn" style="left:131.0px;top:232.2px;width:122.8px;height:30px;letter-spacing:0.85px;background:#485a6d;color:#eef2f5">Unhighlight</div>
<div class="bigbtn" style="left:258.0px;top:232.2px;width:122.8px;height:30px;letter-spacing:0.00px;background:#d6dadd;color:#333;border:1px solid #b9bdc1;line-height:27px">Close</div>
</div>
<div id="status" class="abs"></div>
<div class="abs" style="left:7px;top:661px;width:1px;height:15px;background:#8393a2"></div>
<div class="abs" style="left:16px;top:656px;width:45px;height:24px;background:#f3f3f3"></div>
<div class="abs" style="left:18px;top:661px;font-size:12px;color:#333">Inch</div>
<div class="abs" style="left:45px;top:657px;width:1px;height:22px;background:#dadada"></div>
<svg class="abs" style="left:47px;top:664px" width="12" height="8"><path d="M1.5 1.5 L6 6 L10.5 1.5" fill="none" stroke="#999" stroke-width="1.3"/></svg>
<div class="abs" style="left:69px;top:661px;width:1px;height:15px;background:#8393a2"></div>
<svg class="abs" style="left:80px;top:660px" width="18" height="16"><path d="M2.6 2 V14.3 H16" fill="none" stroke="#dfe5ea" stroke-width="1.4"/><path d="M4 3.2 L15 13.2 M15.2 13.4 L14.6 8.6 M15.2 13.4 L10.4 12.8 M4 3.2 L4.2 6.6 M4 3.2 L7.4 3.4" fill="none" stroke="#dfe5ea" stroke-width="1.3"/></svg>
<div class="abs" style="left:106px;top:656px;width:194px;height:24px;background:#f7f7f7"></div>
<svg class="abs" style="left:307px;top:660px" width="18" height="16"><path d="M2.6 7.4 A6 6 0 0 1 14.3 5.4 M14.6 7.4 A6 6 0 0 1 3 9.5" fill="none" stroke="#dfe5ea" stroke-width="1.3"/><circle cx="2.6" cy="7.4" r="1.3" fill="#dfe5ea"/><circle cx="14.6" cy="7.4" r="1.3" fill="#dfe5ea"/><path d="M5.6 7.6 L8 9.9 L11.8 5.9" fill="none" stroke="#dfe5ea" stroke-width="1.3"/></svg>
<div class="abs" style="left:337px;top:661px;width:1px;height:15px;background:#8393a2"></div>
<div class="abs" style="left:345px;top:660.5px;font-size:14.3px;color:#eaab3c">22 features were selected</div>
</body></html>
